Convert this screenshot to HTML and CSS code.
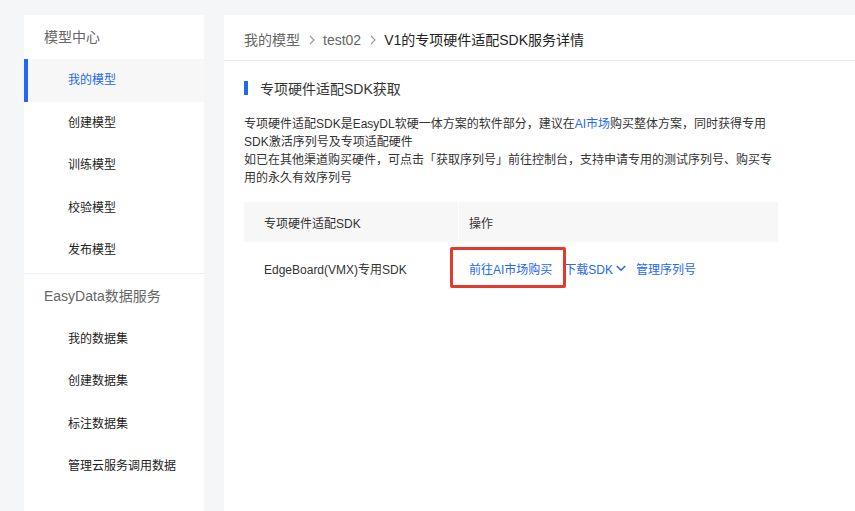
FILE: index.html
```html
<!DOCTYPE html>
<html lang="zh-CN">
<head>
<meta charset="utf-8">
<title>专项硬件适配SDK服务详情</title>
<link rel="stylesheet" href="styles.css">
</head>
<body>
<div class="page">
  <aside class="sidebar">
    <div class="group-title">模型中心</div>
    <div class="nav-item active">我的模型</div>
    <div class="nav-item">创建模型</div>
    <div class="nav-item">训练模型</div>
    <div class="nav-item">校验模型</div>
    <div class="nav-item">发布模型</div>
    <div class="divider"></div>
    <div class="group-title">EasyData数据服务</div>
    <div class="nav-item">我的数据集</div>
    <div class="nav-item">创建数据集</div>
    <div class="nav-item">标注数据集</div>
    <div class="nav-item">管理云服务调用数据</div>
  </aside>
  <main class="main">
    <div class="breadcrumb">
      <span class="crumb">我的模型</span>
      <svg class="sep" width="6" height="10" viewBox="0 0 6 10"><path d="M1 1l4 4-4 4" fill="none" stroke="#999" stroke-width="1.1"/></svg>
      <span class="crumb">test02</span>
      <svg class="sep" width="6" height="10" viewBox="0 0 6 10"><path d="M1 1l4 4-4 4" fill="none" stroke="#999" stroke-width="1.1"/></svg>
      <span class="crumb current">V1的专项硬件适配SDK服务详情</span>
    </div>
    <div class="content">
      <div class="section-title"><span class="bar"></span>专项硬件适配SDK获取</div>
      <p class="desc">专项硬件适配SDK是EasyDL软硬一体方案的软件部分，建议在<span class="link">AI市场</span>购买整体方案，同时获得专用SDK激活序列号及专项适配硬件<br>如已在其他渠道购买硬件，可点击「获取序列号」前往控制台，支持申请专用的测试序列号、购买专用的永久有效序列号</p>
      <div class="table">
        <div class="row head">
          <div class="cell c1">专项硬件适配SDK</div>
          <div class="cell c2">操作</div>
        </div>
        <div class="row body">
          <div class="cell c1">EdgeBoard(VMX)专用SDK</div>
          <div class="cell c2 ops">
            <a class="link op-buy">前往AI市场购买</a>
            <a class="link op-dl">下载SDK<svg class="chev" width="10" height="7" viewBox="0 0 10 7"><path d="M0.8 1l4.2 4.2 4.2-4.2" fill="none" stroke="#2468f2" stroke-width="1.6"/></svg></a>
            <a class="link op-sn">管理序列号</a>
            <span class="highlight"></span>
          </div>
        </div>
      </div>
    </div>
  </main>
</div>
</body>
</html>
```
FILE: styles.css
```css
* { box-sizing: border-box; }
html, body { margin: 0; padding: 0; }
body {
  background: #f5f6f8;
  font-family: "Liberation Sans", "Noto Sans CJK SC", sans-serif;
  color: #333;
  width: 855px;
  height: 511px;
  overflow: hidden;
}
.page {
  display: flex;
  gap: 20px;
  padding: 15px 0 0 24px;
  height: 511px;
}
.sidebar {
  width: 180px;
  background: #fff;
  height: 100%;
  flex: none;
}
.group-title {
  height: 44px;
  line-height: 44px;
  padding-left: 20px;
  font-size: 14px;
  color: #666;
}
.nav-item {
  height: 42.5px;
  line-height: 42.5px;
  padding-left: 44px;
  font-size: 12px;
  color: #222;
}
.nav-item.active {
  background: #f7f7f7;
  color: #2468f2;
  border-left: 4px solid #2468f2;
  padding-left: 40px;
}
.divider {
  height: 1px;
  background: #eceef0;
  margin-top: 1px;
}
.main {
  flex: 1;
  background: #fff;
  height: 100%;
}
.breadcrumb {
  height: 46px;
  padding: 5px 0 0 20px;
  display: flex;
  align-items: center;
  border-bottom: 1px solid #ebebeb;
  font-size: 14px;
}
.crumb { color: #666; line-height: 20px; }
.crumb.current { color: #222; }
.sep { margin: 0 8px 0 9px; }
.content {
  padding: 19px 20px 0 20px;
}
.section-title {
  display: flex;
  align-items: center;
  height: 16px;
  font-size: 14px;
  color: #333;
}
.bar {
  width: 4px;
  height: 14px;
  background: #2468f2;
  margin-right: 12px;
}
.desc {
  margin: 19px 0 0;
  width: 534px;
  font-size: 12px;
  line-height: 18px;
  color: #333;
}
.link { color: #2468f2; text-decoration: none; }
.table {
  width: 534px;
  margin-top: 15px;
  font-size: 12px;
}
.row { display: flex; }
.row.head { height: 40px; background: #f7f7f7; }
.row.body { height: 52px; }
.cell {
  display: flex;
  align-items: center;
}
.c1 { width: 215px; padding-left: 20px; }
.head .c1 { border-right: 1px solid #fff; }
.c2 { flex: 1; padding-left: 10px; }
.ops { position: relative; }
.op-buy { margin-right: 12px; }
.op-dl { display: flex; align-items: center; margin-right: 10px; }
.chev { margin-left: 3px; }
.highlight {
  position: absolute;
  left: -9px;
  top: 5px;
  width: 116px;
  height: 41px;
  border: 3px solid #e23a2f;
  border-radius: 2px;
}
```
